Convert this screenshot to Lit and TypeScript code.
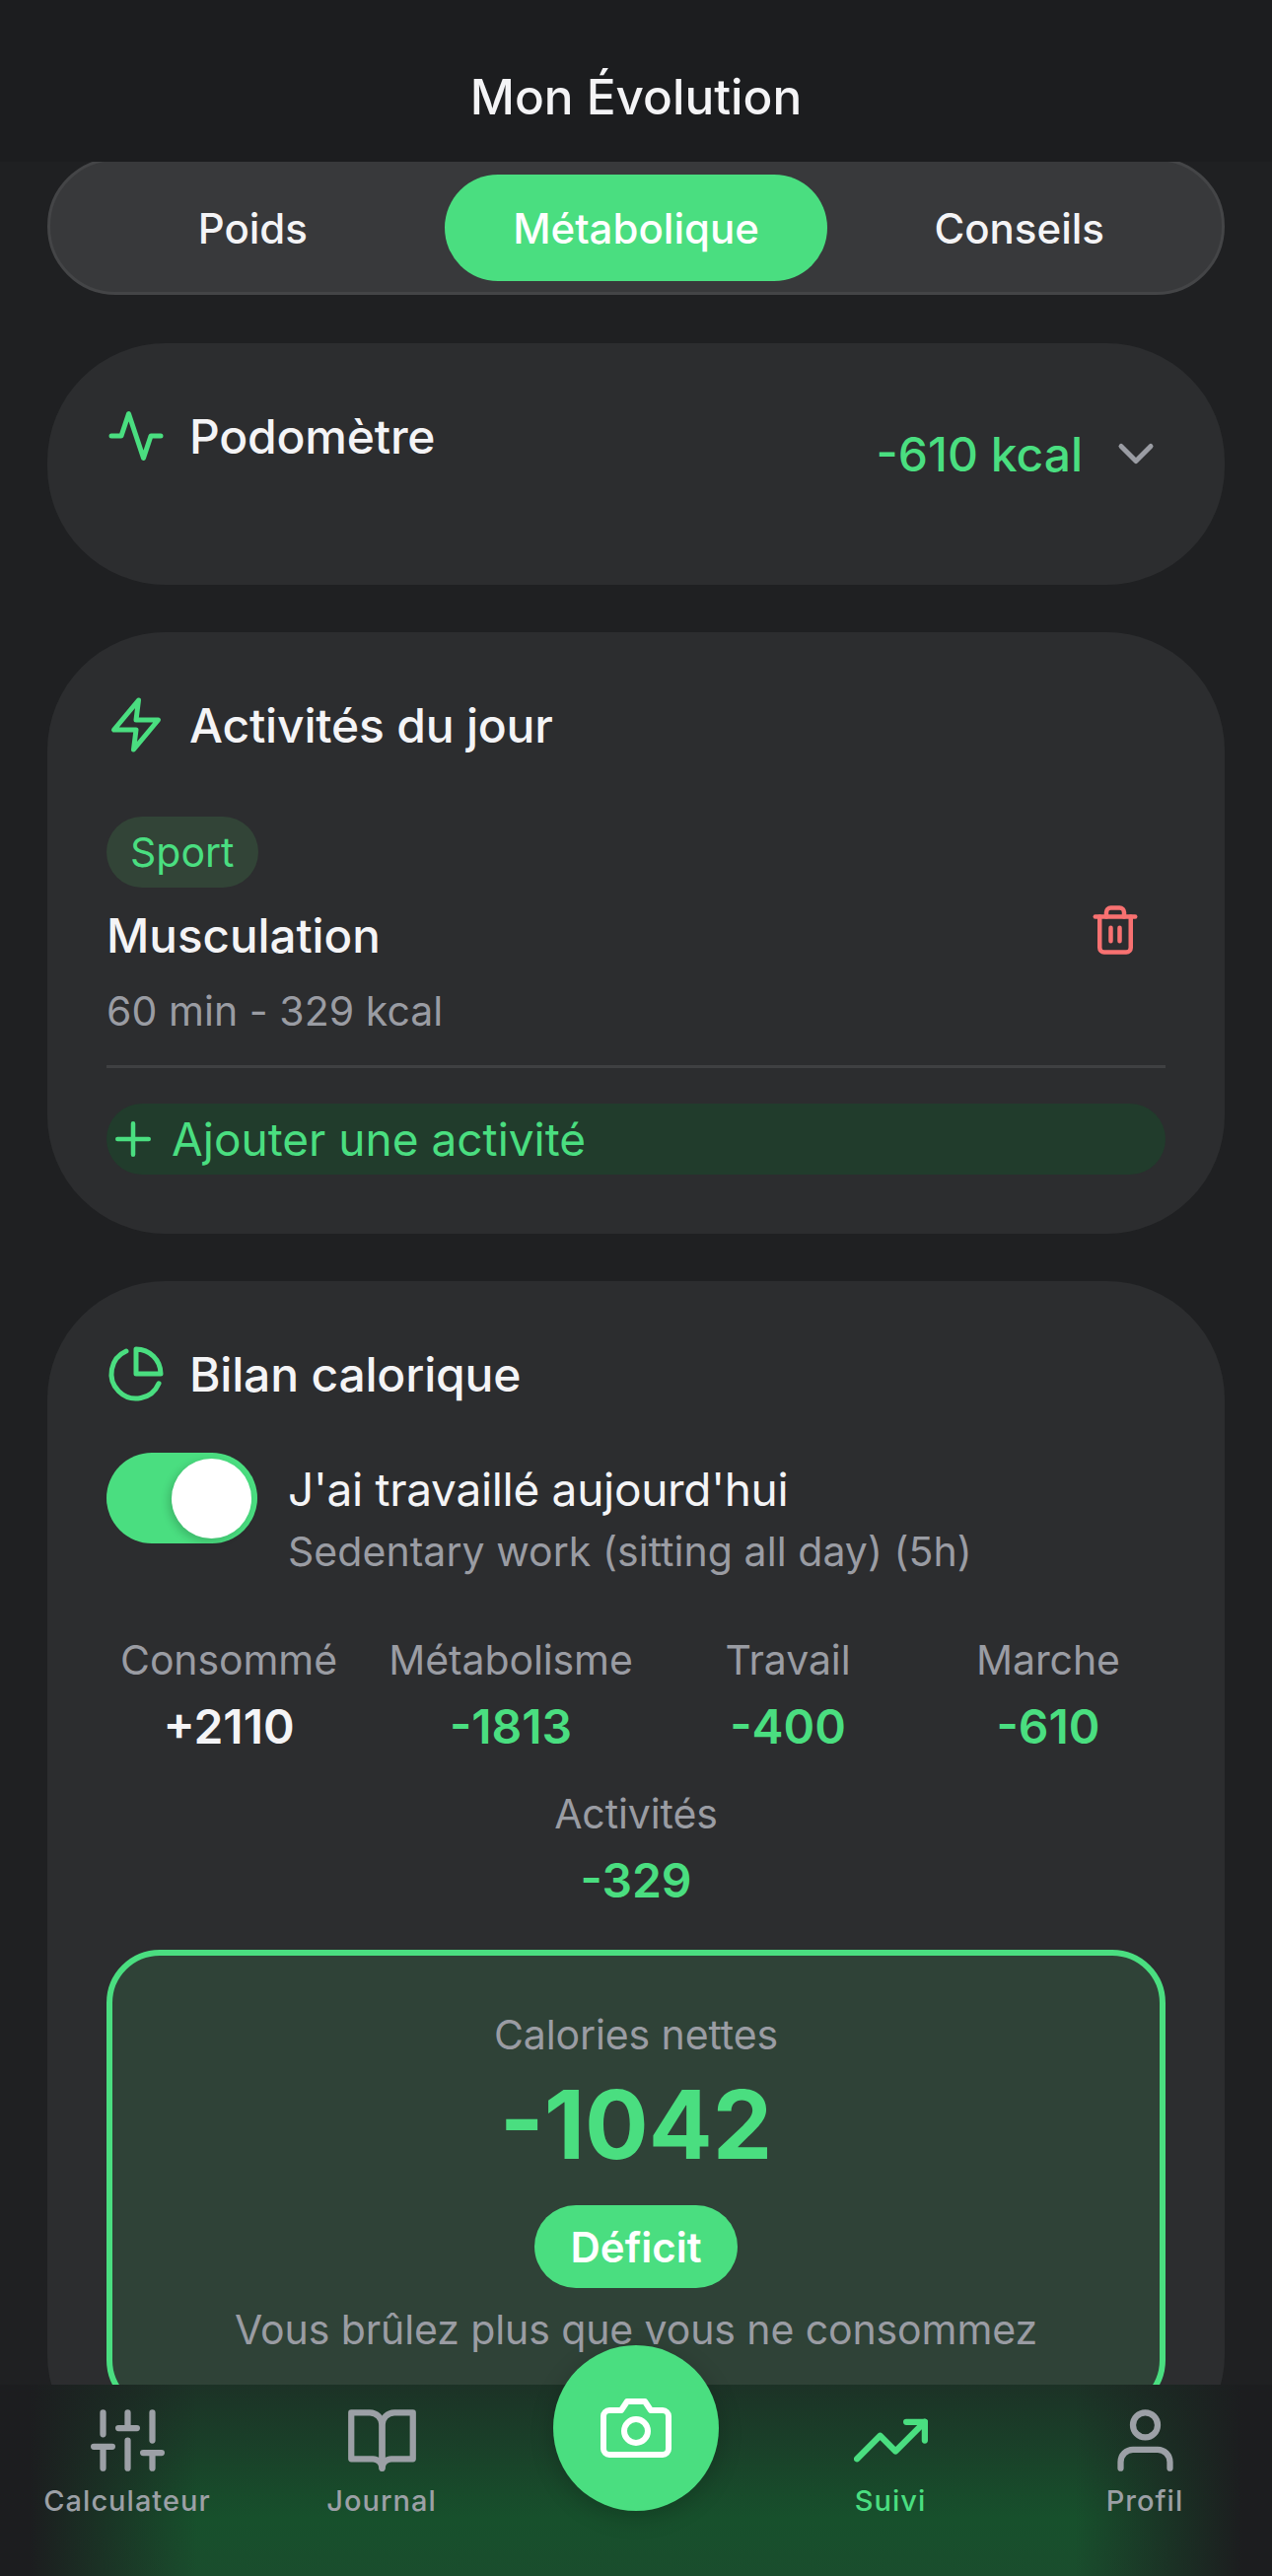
import { LitElement, html, css, svg } from "lit";
import { customElement } from "lit/decorators.js";

const icon = (size: number, cls: string, body: unknown) => html`
  <svg class=${cls} width=${size} height=${size} viewBox="0 0 24 24" fill="none" stroke="currentColor"
    stroke-width="2" stroke-linecap="round" stroke-linejoin="round">${body}</svg>
`;

const activity = svg`<path d="M22 12h-4l-3 9L9 3l-3 9H2" />`;
const zap = svg`<path d="M13 2 3 14h9l-1 8 10-12h-9l1-8z" />`;
const pie = svg`<path d="M21.21 15.89A10 10 0 1 1 8 2.83" /><path d="M22 12A10 10 0 0 0 12 2v10z" />`;
const chevron = svg`<path d="m6 9 6 6 6-6" />`;
const plus = svg`<path d="M12 5v14M5 12h14" />`;
const trash = svg`<path d="M3 6h18" /><path d="M19 6v14a2 2 0 0 1-2 2H7a2 2 0 0 1-2-2V6m3 0V4a2 2 0 0 1 2-2h4a2 2 0 0 1 2 2v2" /><path d="M10 11v6M14 11v6" />`;
const sliders = svg`<path d="M4 21v-7M4 10V3M12 21v-9M12 8V3M20 21v-5M20 12V3M1 14h6M9 8h6M17 16h6" />`;
const book = svg`<path d="M2 3h6a4 4 0 0 1 4 4v14a3 3 0 0 0-3-3H2z" /><path d="M22 3h-6a4 4 0 0 0-4 4v14a3 3 0 0 1 3-3h7z" />`;
const camera = svg`<path d="M23 19a2 2 0 0 1-2 2H3a2 2 0 0 1-2-2V8a2 2 0 0 1 2-2h4l2-3h6l2 3h4a2 2 0 0 1 2 2z" /><circle cx="12" cy="13" r="4" />`;
const trending = svg`<path d="M23 6l-9.5 9.5-5-5L1 18" /><path d="M17 6h6v6" />`;
const user = svg`<path d="M20 21v-2a4 4 0 0 0-4-4H8a4 4 0 0 0-4 4v2" /><circle cx="12" cy="7" r="4" />`;

const stats = [
  { label: "Consommé", value: "+2110", plain: true },
  { label: "Métabolisme", value: "-1813" },
  { label: "Travail", value: "-400" },
  { label: "Marche", value: "-610" },
  { label: "Activités", value: "-329" },
];

@customElement("app-root")
export class AppRoot extends LitElement {
  static styles = css`
    :host {
      display: block;
      position: relative;
      width: 1290px;
      height: 2612px;
      overflow: hidden;
      background: #1f2022;
      color: #f4f4f6;
      font-family: Inter, "Liberation Sans", sans-serif;
    }

    .top {
      position: relative;
      z-index: 1;
      height: 164px;
      background: #1c1d1f;
      display: flex;
      align-items: center;
      justify-content: center;
      padding-top: 32px;
      box-sizing: border-box;
      font-size: 49.5px;
      font-weight: 500;
    }

    main {
      padding: 0 48px;
      display: flex;
      flex-direction: column;
      gap: 48px;
    }

    .tabs {
      display: flex;
      padding: 14px 11px 11px;
      height: 139px;
      box-sizing: border-box;
      border: 3px solid #444547;
      border-radius: 70px;
      background: #38393b;
      margin-top: -4px;
      margin-bottom: 1px;
    }

    .tab {
      flex: 1;
      display: flex;
      align-items: center;
      justify-content: center;
      border-radius: 54px;
      font-size: 42px;
      font-weight: 500;
    }

    .tab.on {
      background: #4ade80;
      color: #fff;
    }

    .card {
      background: #2c2d2f;
      border-radius: 120px;
      padding: 60px;
    }

    .card.short {
      height: 245px;
      box-sizing: border-box;
    }

    .row {
      display: flex;
      justify-content: space-between;
      align-items: flex-start;
    }

    .head {
      display: flex;
      align-items: center;
      gap: 24px;
      height: 72px;
      box-sizing: border-box;
      padding-bottom: 4px;
      font-size: 48px;
      font-weight: 500;
      letter-spacing: -0.2px;
      color: #f4f4f6;
    }

    .green {
      color: #4ade80;
    }

    .total {
      display: flex;
      align-items: center;
      gap: 24px;
      height: 72px;
      margin-top: 16px;
      font-size: 48px;
      font-weight: 500;
    }

    .gray {
      color: #9a9ca3;
    }

    .item {
      display: flex;
      align-items: center;
      justify-content: space-between;
      margin-top: 55px;
      padding-bottom: 23px;
      border-bottom: 3px solid #3f4042;
    }

    .badge {
      display: inline-flex;
      align-items: center;
      height: 72px;
      padding: 0 25px 0 24px;
      border-radius: 36px;
      background: #324437;
      color: #4ade80;
      font-size: 41px;
    }

    .name {
      margin-top: 13px;
      font-size: 47.5px;
      line-height: 72px;
      font-weight: 500;
    }

    .small {
      font-size: 41px;
      line-height: 63px;
      letter-spacing: -0.1px;
      color: #9a9ca3;
    }

    .item .small,
    .work .small {
      letter-spacing: 0.05px;
    }

    .item .small {
      margin-top: 9px;
    }

    .del {
      display: flex;
      padding: 24px;
      color: #f87171;
    }

    .add {
      display: flex;
      align-items: center;
      gap: 12px;
      height: 72px;
      margin-top: 36px;
      border-radius: 36px;
      background: #213c2c;
      color: #4ade80;
      font-size: 46px;
    }

    .work {
      display: flex;
      gap: 31px;
      margin-top: 42px;
    }

    .switch {
      flex: none;
      position: relative;
      width: 153px;
      height: 92px;
      border-radius: 46px;
      background: #4ade80;
    }

    .knob {
      position: absolute;
      top: 6px;
      right: 6px;
      width: 81px;
      height: 81px;
      border-radius: 50%;
      background: #fff;
      box-shadow: -3px 3px 8px rgba(0, 0, 0, 0.18);
    }

    .work-title {
      margin-top: 6px;
      font-size: 46px;
      line-height: 63px;
      letter-spacing: -0.3px;
    }

    .stats {
      display: grid;
      grid-template-columns: 248px 324px 238px 264px;
      row-gap: 21px;
      margin-top: 47px;
      text-align: center;
    }

    .stat:nth-child(4) {
      padding-left: 26px;
    }

    .stat:nth-child(5) {
      grid-column: 1 / -1;
    }

    .value {
      font-size: 48px;
      line-height: 72px;
      font-weight: 600;
      color: #4ade80;
    }

    .value.plain {
      color: #f4f4f6;
    }

    .net {
      margin-top: 34px;
      height: 470px;
      box-sizing: border-box;
      border: 6px solid #4ade80;
      border-radius: 54px;
      background: #2f4237;
      padding-top: 49px;
      display: flex;
      flex-direction: column;
      align-items: center;
      text-align: center;
    }

    .net-value {
      margin-top: -1px;
      font-size: 96px;
      line-height: 120px;
      font-weight: 700;
      color: #4ade80;
    }

    .pill {
      display: flex;
      align-items: center;
      height: 84px;
      padding: 0 36px;
      margin-top: 22px;
      margin-bottom: 11px;
      border-radius: 42px;
      background: #4ade80;
      color: #fff;
      font-size: 42px;
      font-weight: 600;
    }

    .nav {
      position: absolute;
      left: 0;
      right: 0;
      bottom: 0;
      height: 194px;
      display: grid;
      grid-template-columns: repeat(5, 1fr);
      background:
        linear-gradient(90deg, #1c1d1f 30px, rgba(28, 29, 31, 0) 200px, rgba(28, 29, 31, 0) 1090px, #1c1d1f 1260px),
        linear-gradient(180deg, #1c3226 0%, #17502c 70%, #1a4d2d 100%);
    }

    .nav-item {
      display: flex;
      flex-direction: column;
      align-items: center;
      padding-top: 19px;
      font-size: 29px;
      letter-spacing: 1px;
      color: #9ca0a6;
      font-weight: 500;
    }

    .nav-item.on {
      color: #4ade80;
    }

    .nav-item span {
      margin-top: 2px;
      line-height: 44px;
    }

    .cam {
      position: absolute;
      left: 561px;
      top: -40px;
      width: 168px;
      height: 168px;
      border-radius: 50%;
      background: #4ade80;
      display: flex;
      align-items: center;
      justify-content: center;
      color: #fff;
      box-shadow: 0 6px 24px rgba(0, 0, 0, 0.2);
    }
  `;

  render() {
    return html`
      <div class="top">Mon Évolution</div>
      <main>
        <div class="tabs">
          <div class="tab">Poids</div>
          <div class="tab on">Métabolique</div>
          <div class="tab">Conseils</div>
        </div>

        <section class="card short">
          <div class="row">
            <div class="head">${icon(60, "green", activity)}Podomètre</div>
            <div class="total">
              <span class="green">-610 kcal</span>
              ${icon(60, "gray", chevron)}
            </div>
          </div>
        </section>

        <section class="card">
          <div class="head">${icon(60, "green", zap)}Activités du jour</div>
          <div class="item">
            <div>
              <div class="badge">Sport</div>
              <div class="name">Musculation</div>
              <div class="small">60 min - 329 kcal</div>
            </div>
            <div class="del">${icon(54, "", trash)}</div>
          </div>
          <div class="add">${icon(54, "", plus)}Ajouter une activité</div>
        </section>

        <section class="card">
          <div class="head">${icon(60, "green", pie)}Bilan calorique</div>
          <div class="work">
            <div class="switch"><div class="knob"></div></div>
            <div>
              <div class="work-title">J'ai travaillé aujourd'hui</div>
              <div class="small">Sedentary work (sitting all day) (5h)</div>
            </div>
          </div>
          <div class="stats">
            ${stats.map(
              (s) => html`
                <div class="stat">
                  <div class="small">${s.label}</div>
                  <div class="value ${s.plain ? "plain" : ""}">${s.value}</div>
                </div>
              `
            )}
          </div>
          <div class="net">
            <div class="small">Calories nettes</div>
            <div class="net-value">-1042</div>
            <div class="pill">Déficit</div>
            <div class="small">Vous brûlez plus que vous ne consommez</div>
          </div>
        </section>
      </main>

      <nav class="nav">
        <div class="nav-item">${icon(75, "", sliders)}<span>Calculateur</span></div>
        <div class="nav-item">${icon(75, "", book)}<span>Journal</span></div>
        <div></div>
        <div class="nav-item on">${icon(75, "", trending)}<span>Suivi</span></div>
        <div class="nav-item">${icon(75, "", user)}<span>Profil</span></div>
        <div class="cam">${icon(72, "", camera)}</div>
      </nav>
    `;
  }
}
